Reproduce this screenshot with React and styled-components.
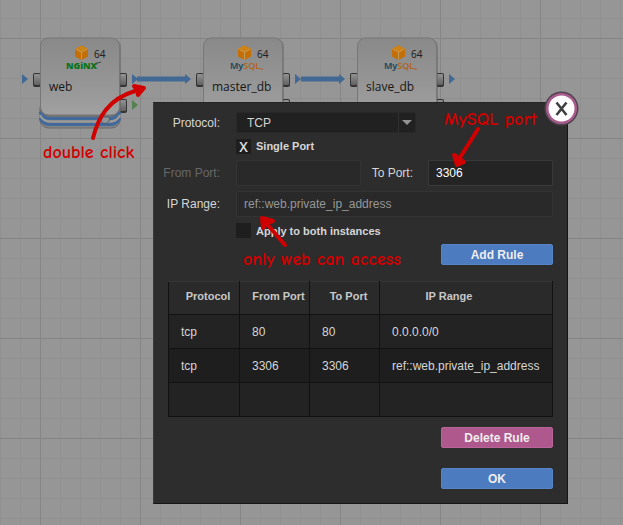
import React, { useState } from "react";
import styled, { createGlobalStyle, css } from "styled-components";

const GlobalStyle = createGlobalStyle`
  *, *::before, *::after { box-sizing: border-box; }
  body { margin: 0; background: #969696; }
`;

const uiFont = '"Liberation Sans", Arial, sans-serif';

const Page = styled.main`
  position: relative;
  min-height: 100vh;
  overflow: hidden;
  padding: 102px 55px 20px 153px;
  font-family: ${uiFont};
  background-color: #969696;
  background-image: linear-gradient(90deg, #868686 1px, transparent 1px),
    linear-gradient(#848484 1px, transparent 1px),
    linear-gradient(90deg, #909090 1px, transparent 1px),
    linear-gradient(#909090 1px, transparent 1px);
  background-size: 100px 100px, 100px 100px, 20px 20px, 20px 20px;
  background-position: 40px 38px, 40px 38px, 0 18px, 0 18px;
`;

const Links = styled.svg`
  position: absolute;
  top: 0;
  left: 0;
  pointer-events: none;
`;

const NodeBox = styled.div`
  position: absolute;
  top: 37px;
  left: ${(p) => p.$x}px;
  width: 80px;
  height: 92px;
`;

const NodeArt = styled.svg`
  position: absolute;
  top: 0;
  left: -8px;
  overflow: visible;
`;

const NodeBits = styled.span`
  position: absolute;
  top: 10px;
  left: 54px;
  font-family: "Noto Sans", sans-serif;
  font-size: 10px;
  line-height: 14px;
  color: #222;
`;

const NodeBrand = styled.span`
  position: absolute;
  top: 23px;
  left: ${(p) => (p.$nginx ? 26 : 27)}px;
  font-family: "Noto Sans", sans-serif;
  font-size: 9px;
  line-height: 12px;
  font-weight: ${(p) => (p.$nginx ? 900 : 600)};
  color: ${(p) => (p.$nginx ? "#07731b" : "#15465c")};
`;

const BrandTail = styled.span`
  color: #b06420;
`;

const NodeName = styled.span`
  position: absolute;
  top: 41px;
  left: 9px;
  font-family: "Open Sans", sans-serif;
  font-size: 12px;
  line-height: 18px;
  color: #171717;
`;

const Dialog = styled.section`
  position: relative;
  padding: 9px 14px 14px;
  color: #d6d6d6;
  background: #2d2d2d;
  border: 1px solid #151515;
  border-top-color: #242424;
  border-left-color: #3b3b3b;
  font-size: 12px;
`;

const CloseButton = styled.button`
  position: absolute;
  top: -12px;
  right: -12px;
  width: 35px;
  height: 35px;
  padding: 0;
  border: 0;
  border-radius: 50%;
  background: none;
  svg { display: block; }
`;

const Form = styled.form`
  display: grid;
  gap: 5px;
  margin-bottom: 16px;
`;

const Row = styled.div`
  display: grid;
  grid-template-columns: 52px 1fr;
  column-gap: 16px;
  align-items: center;
  min-height: ${(p) => p.$height}px;
  margin-bottom: ${(p) => p.$after || 0}px;
`;

const Label = styled.label`
  justify-self: end;
  white-space: nowrap;
  font-size: 12px;
  line-height: 16px;
  color: ${(p) => (p.$muted ? "#686868" : "#d6d6d6")};
`;

const PortFields = styled.div`
  display: grid;
  grid-template-columns: 1fr 67px 1fr;
  align-items: center;
  ${Label} { margin-right: 15px; }
`;

const TextField = styled.input`
  width: 100%;
  min-width: 0;
  height: 26px;
  padding: 0 7px;
  border: 1px solid ${(p) => (p.$quiet ? "#333" : "#383838")};
  border-radius: 1px;
  outline: 0;
  background: ${(p) => (p.$quiet ? "#292929" : "#242424")};
  color: ${(p) => (p.$quiet ? "#979797" : "#fff")};
  font-family: ${uiFont};
  font-size: 12px;
`;

const SelectWrap = styled.div`
  position: relative;
  width: 180px;
  height: 21px;
`;

const Select = styled.select`
  appearance: none;
  display: block;
  width: 100%;
  height: 100%;
  padding: 0 24px 0 10px;
  border: 1px solid #282828;
  border-radius: 2px;
  background: #212121;
  color: #d4d4d4;
  font-family: ${uiFont};
  font-size: 12px;
`;

const Caret = styled.svg`
  position: absolute;
  top: 0;
  right: 0;
  pointer-events: none;
`;

const CheckRow = styled.label`
  grid-column: 2;
  display: flex;
  align-items: center;
  gap: 5px;
  font-size: 11px;
  font-weight: 700;
  line-height: 16px;
`;

const Checkbox = styled.input`
  appearance: none;
  display: grid;
  place-items: center;
  width: 15px;
  height: 15px;
  margin: 0;
  background: #1e1e1e;
  color: #e4e4e4;
  font-family: "Noto Sans", sans-serif;
  font-size: 14px;
  font-weight: 500;
  line-height: 15px;
  &:checked::before { content: "X"; }
`;

const Actions = styled.div`
  display: flex;
  justify-content: flex-end;
  margin-top: ${(p) => p.$gap || 0}px;
`;

const Button = styled.button`
  width: 112px;
  height: 21px;
  padding: 0;
  border: 1px solid ${(p) => (p.$danger ? "#b9659a" : "#5684c4")};
  border-radius: 2px;
  background: ${(p) => (p.$danger ? "#af588d" : "#4c7bbf")};
  color: #eee;
  font-family: ${uiFont};
  font-size: 12px;
  font-weight: 700;
  line-height: 18px;
`;

const Table = styled.table`
  width: 100%;
  table-layout: fixed;
  border-collapse: collapse;
  border: 1px solid #111;
  border-top-color: #353535;
  font-size: 12px;
  line-height: 16px;
`;

const cell = css`
  height: 34px;
  border-right: 1px solid #121212;
  border-bottom: 1px solid #121212;
  white-space: nowrap;
`;

const Th = styled.th`
  ${cell}
  height: 33px;
  padding: 0 ${(p) => p.$after || 0}px 4px ${(p) => p.$indent || 0}px;
  color: #c8c8c8;
  background: #2a2a2a;
  font-size: 11px;
  font-weight: 700;
  width: ${(p) => p.$width};
`;

const Td = styled.td`
  ${cell}
  padding: 0 12px;
  background: #232323;
  tr:nth-child(2) & { background: #1e1e1e; }
`;

const Notes = styled.div`
  position: absolute;
  top: 0;
  left: 0;
  pointer-events: none;
`;

const NoteArrows = styled.svg`
  display: block;
`;

const Note = styled.span`
  position: absolute;
  top: ${(p) => p.$y}px;
  left: ${(p) => p.$x}px;
  color: #d00000;
  font-family: "Comic Sans MS", "Comic Neue", "Open Sans", sans-serif;
  font-size: 18px;
  font-weight: 700;
  line-height: 22px;
  white-space: nowrap;
`;

function Port({ x, y }) {
  return (
    <g>
      <rect x={x} y={y} width="8" height="14" rx="2" fill="#343434" />
      <rect x={x + 1} y={y + 1} width="6" height="11" rx="1" fill="url(#portFace)" />
    </g>
  );
}

function Node({ x, name, nginx }) {
  return (
    <NodeBox $x={x}>
      <NodeArt width="96" height="94" viewBox="0 0 96 94">
        <defs>
          <linearGradient id="portFace" x1="0" y1="0" x2="0" y2="1">
            <stop offset="0" stopColor="#929292" />
            <stop offset="1" stopColor="#626262" />
          </linearGradient>
          <linearGradient id="nodeFace" x1="0" y1="0" x2="0" y2="1">
            <stop offset="0" stopColor="#898989" />
            <stop offset="0.7" stopColor="#989898" />
            <stop offset="1" stopColor="#a1a1a1" />
          </linearGradient>
        </defs>
        <Port x={1} y={36} />
        <Port x={87} y={36} />
        <Port x={87} y={62} />
        <rect x="9" y="2" width="80" height="78" rx="8" fill="#555" opacity=".4" />
        {nginx && (
          <g>
            <path d="M8 70 H88 V84 Q86 91 79 91 H17 Q10 91 8 84 Z" fill="#858585" stroke="#696969" />
            <g fill="none">
              <path d="M8 72 Q11 79 18 79 H78 Q85 79 88 72" stroke="#606060" />
              <path d="M8 75 Q11 81.500 18 81.500 H78 Q85 81.500 88 75 M8 81 Q11 87.500 18 87.500 H78 Q85 87.500 88 81" stroke="#41699b" strokeWidth="3" />
              <path d="M8 78 Q11 84.500 18 84.500 H78 Q85 84.500 88 78" stroke="#9b9b9b" strokeWidth="2" />
            </g>
          </g>
        )}
        <rect x="8.5" y="1" width="79" height="77" rx="8" fill="url(#nodeFace)" stroke="#777" />
        {nginx && <path d="M69 80 A4.500 4.500 0 1 0 77 80 Z" fill="#8f9499" stroke="#4f5c69" />}
        <path d="M49.500 8.500 L56 12 V19.500 L49.500 23 L43 19.500 V12 Z" fill="#c46f05" />
        <path d="M49.500 8.500 L56 12 L49.500 15.500 L43 12 Z" fill="#cf8216" />
        <path d="M43.500 12 L49.500 15.300 L55.500 12 M49.500 15.300 V22.500" fill="none" stroke="#c39b58" strokeWidth="1" />
        {nginx && <path d="M64 28 q-1 -3 2 -2 l3 -1" fill="none" stroke="#444" />}
        {!nginx && <path d="M65 32 h3" stroke="#a85c35" />}
      </NodeArt>
      <NodeBits>64</NodeBits>
      <NodeBrand $nginx={nginx}>
        {nginx ? "NGiNX" : <>My<BrandTail>SQL</BrandTail></>}
      </NodeBrand>
      <NodeName>{name}</NodeName>
    </NodeBox>
  );
}

const rules = [
  ["tcp", "80", "80", "0.0.0.0/0"],
  ["tcp", "3306", "3306", "ref::web.private_ip_address"],
  ["", "", "", ""],
];

export default function App() {
  const [single, setSingle] = useState(true);
  const [both, setBoth] = useState(false);

  return (
    <Page>
      <GlobalStyle />
      <Links width="623" height="130" viewBox="0 0 623 130" aria-hidden="true">
        <g fill="#426894">
          <path d="M22 74 L28 79 L22 84 Z" />
          <path d="M132 74 L138 79 L132 84 Z M137 76.500 H185 V74 L191 79 L185 84 V81.500 H137 Z" />
          <path d="M295 74 L301 79 L295 84 Z M301 76.500 H339 V74 L345 79 L339 84 V81.500 H301 Z" />
          <path d="M449 74 L455 79 L449 84 Z" />
        </g>
        <path d="M132 100 L138 105 L132 110 Z" fill="#55804f" />
      </Links>
      <Node x={40} name="web" nginx />
      <Node x={203} name="master_db" />
      <Node x={357} name="slave_db" />

      <Dialog role="dialog" aria-label="Port rules">
        <CloseButton type="button" aria-label="Close">
          <svg width="35" height="35" viewBox="0 0 35 35">
            <circle cx="17.500" cy="17.500" r="17" fill="#50434d" />
            <circle cx="17.500" cy="17.500" r="15.500" fill="#a85c8d" />
            <circle cx="17.500" cy="17.500" r="13" fill="#fff" />
            <path d="M12.500 11.500 L22.500 24 M22.500 11.500 L12.500 24" stroke="#3f4040" strokeWidth="2.600" />
          </svg>
        </CloseButton>

        <Form onSubmit={(e) => e.preventDefault()}>
          <Row $height={21}>
            <Label htmlFor="protocol">Protocol:</Label>
            <SelectWrap>
              <Select id="protocol" defaultValue="TCP">
                <option>TCP</option>
                <option>UDP</option>
              </Select>
              <Caret width="18" height="21" viewBox="0 0 18 21">
                <path d="M0.500 1 V20" stroke="#303030" />
                <path d="M4 8 H14 L9 13 Z" fill="#929292" />
              </Caret>
            </SelectWrap>
          </Row>
          <Row $height={16} $after={1}>
            <CheckRow>
              <Checkbox type="checkbox" checked={single} onChange={() => setSingle(!single)} />
              Single Port
            </CheckRow>
          </Row>
          <Row $height={26}>
            <Label htmlFor="from" $muted={single}>From Port:</Label>
            <PortFields>
              <TextField id="from" $quiet disabled={single} />
              <Label htmlFor="to">To Port:</Label>
              <TextField id="to" defaultValue="3306" />
            </PortFields>
          </Row>
          <Row $height={26}>
            <Label htmlFor="range">IP Range:</Label>
            <TextField id="range" $quiet defaultValue="ref::web.private_ip_address" />
          </Row>
          <Row $height={17}>
            <CheckRow>
              <Checkbox type="checkbox" checked={both} onChange={() => setBoth(!both)} />
              Apply to both instances
            </CheckRow>
          </Row>
          <Actions>
            <Button type="submit">Add Rule</Button>
          </Actions>
        </Form>

        <Table>
          <thead>
            <tr>
              <Th $width="71px" $indent={8}>Protocol</Th>
              <Th $width="70px" $indent={8}>From Port</Th>
              <Th $width="70px" $indent={8}>To Port</Th>
              <Th $after={34}>IP Range</Th>
            </tr>
          </thead>
          <tbody>
            {rules.map((rule, i) => (
              <tr key={i}>
                {rule.map((value, j) => <Td key={j}>{value}</Td>)}
              </tr>
            ))}
          </tbody>
        </Table>

        <Actions $gap={10}>
          <Button type="button" $danger>Delete Rule</Button>
        </Actions>
        <Actions $gap={20}>
          <Button type="button">OK</Button>
        </Actions>
      </Dialog>

      <Notes>
        <NoteArrows width="623" height="280" viewBox="0 0 623 280" aria-hidden="true">
          <g fill="none" stroke="#d00000" strokeWidth="4" strokeLinecap="round" strokeLinejoin="round">
            <path d="M93 138 C98 118 108 99 135 91" />
            <path d="M478 129 L461 156" />
            <path d="M285 245 L267 224" />
          </g>
          <g fill="#d00000" stroke="#d00000" strokeWidth="4" strokeLinejoin="round">
            <path d="M134 86 L144 88 L138 95 L137 90 Z" />
            <path d="M454 155 L457 165 L464 162 L459 158 Z" />
            <path d="M262 218 L273 221 L267 223 L263 228 Z" />
          </g>
        </NoteArrows>
        <Note $x={43} $y={142}>double click</Note>
        <Note $x={444} $y={109}>MySQL port</Note>
        <Note $x={243} $y={249}>only web can access</Note>
      </Notes>
    </Page>
  );
}
